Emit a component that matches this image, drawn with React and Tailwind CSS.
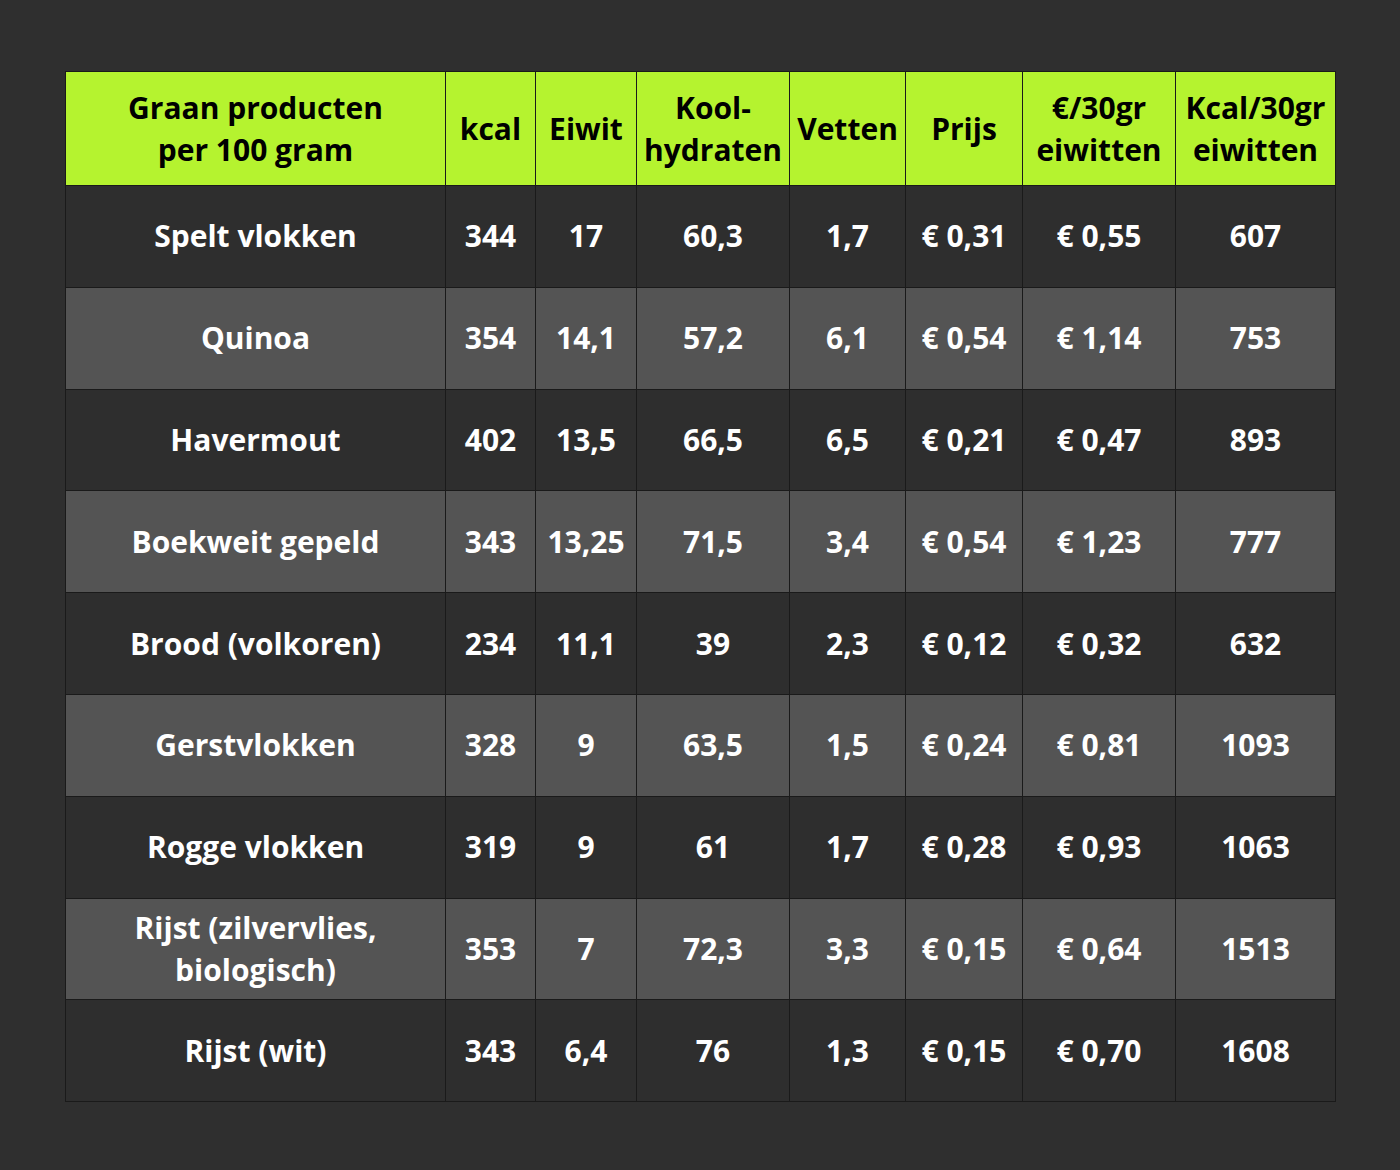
const COLS = ['w-[380px]', 'w-[90px]', 'w-[101px]', 'w-[153px]', 'w-[116px]', 'w-[117px]', 'w-[153px]', 'w-[160px]']

const HEAD = [
  ['Graan producten', 'per 100 gram'],
  ['kcal'],
  ['Eiwit'],
  ['Kool-', 'hydraten'],
  ['Vetten'],
  ['Prijs'],
  ['€/30gr', 'eiwitten'],
  ['Kcal/30gr', 'eiwitten'],
]

const ROWS = [
  [['Spelt vlokken'], '344', '17', '60,3', '1,7', '€ 0,31', '€ 0,55', '607'],
  [['Quinoa'], '354', '14,1', '57,2', '6,1', '€ 0,54', '€ 1,14', '753'],
  [['Havermout'], '402', '13,5', '66,5', '6,5', '€ 0,21', '€ 0,47', '893'],
  [['Boekweit gepeld'], '343', '13,25', '71,5', '3,4', '€ 0,54', '€ 1,23', '777'],
  [['Brood (volkoren)'], '234', '11,1', '39', '2,3', '€ 0,12', '€ 0,32', '632'],
  [['Gerstvlokken'], '328', '9', '63,5', '1,5', '€ 0,24', '€ 0,81', '1093'],
  [['Rogge vlokken'], '319', '9', '61', '1,7', '€ 0,28', '€ 0,93', '1063'],
  [['Rijst (zilvervlies,', 'biologisch)'], '353', '7', '72,3', '3,3', '€ 0,15', '€ 0,64', '1513'],
  [['Rijst (wit)'], '343', '6,4', '76', '1,3', '€ 0,15', '€ 0,70', '1608'],
]

function Lines({ lines }) {
  return lines.map((l, i) => <div key={i}>{l}</div>)
}

export default function App() {
  return (
    <div className="min-h-[1170px] w-[1400px] bg-[#2f2f2f] pt-[71px] pl-[65px]" style={{ fontFamily: '"Open Sans", sans-serif' }}>
      <table className="table-fixed border-collapse w-[1270px] text-[30px] font-bold leading-[42px] text-center">
        <colgroup>
          {COLS.map((c, i) => <col key={i} className={c} />)}
        </colgroup>
        <thead>
          <tr className="h-[114px] bg-[#b5f32f] text-black">
            {HEAD.map((h, i) => (
              <th key={i} className="border border-[#1a1a1a] p-0 align-middle whitespace-nowrap">
                <Lines lines={h} />
              </th>
            ))}
          </tr>
        </thead>
        <tbody>
          {ROWS.map((r, ri) => (
            <tr key={ri} className={`h-[101.8px] text-white ${ri % 2 === 1 ? 'bg-[#545454]' : 'bg-[#2e2e2e]'}`}>
              {r.map((v, ci) => (
                <td key={ci} className="border border-[#1a1a1a] p-0 align-middle whitespace-nowrap">
                  {ci === 0 ? <Lines lines={v} /> : v}
                </td>
              ))}
            </tr>
          ))}
        </tbody>
      </table>
    </div>
  )
}
